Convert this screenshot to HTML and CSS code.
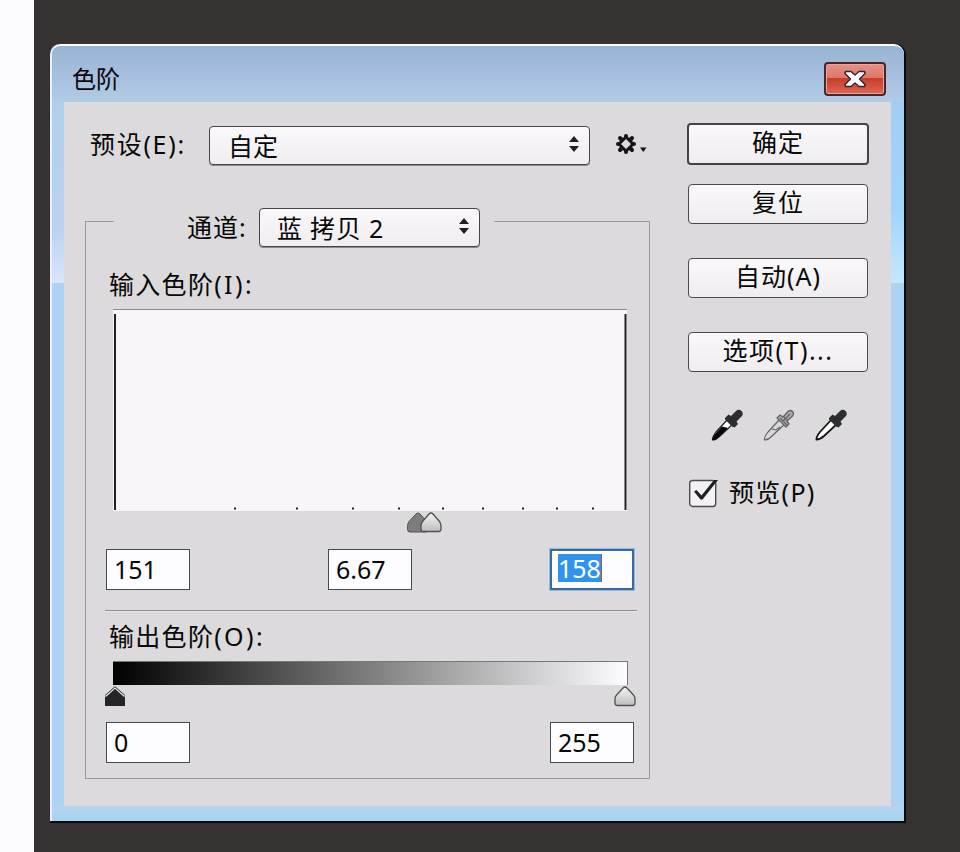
FILE: index.html
```html
<!DOCTYPE html>
<html lang="zh-CN">
<head>
  <meta charset="UTF-8">
  <meta name="viewport" content="width=device-width, initial-scale=1.0">
  <title>色阶</title>
  <link rel="stylesheet" href="styles.css">
</head>
<body>
  <div class="page-edge"></div>
  <main class="workspace">
    <div class="dialog">
      <header class="titlebar">
        <h1>色阶</h1>
        <button class="close" type="button" aria-label="关闭">
          <svg width="24" height="20" viewBox="0 0 24 20">
            <path d="M2.500 2.500h5.500l4 3.500 4-3.500h5.500l.5 2L16.500 10l5.500 5.500-.5 2H16L12 14l-4 3.500H2.500l-.5-2L7.500 10 2 4.500z" fill="#fff" stroke="#342638" stroke-width="1.500" stroke-linejoin="round"/>
          </svg>
        </button>
      </header>

      <div class="panel">
        <section class="settings">
          <div class="preset">
            <span class="label">预设(E):</span>
            <div class="select select-preset">
              <span>自定</span>
              <svg class="arrows" width="12" height="16" viewBox="0 0 12 16"><path d="M6 0l5 6H1zM1 10h10l-5 6z"/></svg>
            </div>
            <svg class="gear" width="32" height="24" viewBox="0 0 32 24">
              <path d="M10 4.500l5.500 2 2 5.500-2 5.500-5.500 2-5.500-2-2-5.500 2-5.500zM10 7l-5 5 5 5 5-5z" fill="#151515" fill-rule="evenodd"/>
              <path d="M10 4v1M10 19v1M2 12h1M17 12h1M4 6l1 1M15 17l1 1M16 6l-1 1M5 17l-1 1" stroke="#151515" stroke-width="4" stroke-linecap="round"/>
              <path d="M24 15.500h6.500l-3.200 4.500z" fill="#151515"/>
            </svg>
          </div>

          <fieldset class="group">
            <legend>
              <span class="label">通道:</span>
              <div class="select select-channel">
                <span>蓝 拷贝 2</span>
                <svg class="arrows" width="12" height="16" viewBox="0 0 12 16"><path d="M6 0l5 6H1zM1 10h10l-5 6z"/></svg>
              </div>
            </legend>

            <div class="label label-input">输入色阶<span class="key">(I):</span></div>
            <svg class="histogram" width="515" height="202" viewBox="0 0 515 202">
              <rect width="514" height="202" fill="#f8f6fa"/>
              <path d="M0 .5h514" fill="none" stroke="#8b8a8c"/>
              <path d="M2 5v196M512.500 5v196" stroke="#202020" stroke-width="2"/>
              <path d="M121 199.500h2M183 199.500h2M239 199.500h2M285 199.500h2M329 199.500h2M369 199.500h2M409 199.500h2M443 199.500h2M479 199.500h2" stroke="#222" stroke-width="2"/>
            </svg>
            <svg class="track" width="532" height="38" viewBox="0 0 532 38">
              <defs>
                <linearGradient id="light" x2="0" y2="1">
                  <stop offset="0" stop-color="#f4f4f4"/>
                  <stop offset="1" stop-color="#bdbdbd"/>
                </linearGradient>
              </defs>
              <path d="M314 2q-1 0-2 1l-7 7.500q-1.500 2-1.500 5v3q0 2.500 2.500 2.500h16q2.500 0 2.500-2.500v-3q0-3-1.500-5l-7-7.500q-1-1-2-1z" fill="#7e7d7e" stroke="#555"/>
              <path d="M327 2q-1 0-2 1l-6.500 7.500q-1.500 2-1.500 4.500v3q0 2.500 2.500 2.500h15q2.500 0 2.500-2.500v-3q0-2.500-1.500-4.500L329 3q-1-1-2-1z" fill="url(#light)" stroke="#505050" stroke-width="1.300"/>
            </svg>
            <div class="fields">
              <div class="field">151</div>
              <div class="field">6.67</div>
              <div class="field focused"><span class="selection">158</span></div>
            </div>

            <div class="divider"></div>

            <div class="label label-output">输出色阶<span class="key">(O):</span></div>
            <div class="ramp"></div>
            <svg class="track" width="532" height="37" viewBox="0 0 532 37">
              <path d="M11 2L1 11.500V21h20v-9.500z" fill="#232527"/>
              <path d="M1.500 11.500L11 3l9.500 8.500" fill="none" stroke="#e5e5e5" stroke-width="1.200"/>
              <path d="M1 10.500L11 1.700l10 8.800" fill="none" stroke="#444"/>
              <path d="M521 2q-1 0-2 1l-6.500 7Q511 11.500 511 14v4q0 2.500 2.500 2.500h15q2.500 0 2.500-2.500v-4q0-2.500-1.500-4L523 3q-1-1-2-1z" fill="url(#light)" stroke="#505050" stroke-width="1.300"/>
            </svg>
            <div class="fields">
              <div class="field">0</div>
              <div class="field">255</div>
            </div>
          </fieldset>
        </section>

        <aside class="actions">
          <button class="btn btn-default" type="button">确定</button>
          <button class="btn btn-reset" type="button">复位</button>
          <button class="btn" type="button">自动(A)</button>
          <button class="btn btn-options" type="button">选项(T)...</button>

          <div class="pickers">
            <svg width="32" height="32" viewBox="0 0 32 32">
              <path d="M17 10L5 23Q1 28 1.500 31 5 31 9 27L22 15z" fill="#fff" stroke="#222" stroke-width="1.200"/>
              <path d="M11 17.500L5 24Q1 28 1.500 31 5 31 9 27l8-8z" fill="#050505"/>
              <path d="M14 9l3.500-3.500L20 7l5-5q3-2.500 5.500 0t0 5.500l-5 5 1.500 2.500-3.500 3.500-2.500-1L14 10.500z" fill="#2c2d2f"/>
            </svg>
            <svg width="32" height="32" viewBox="0 0 32 32">
              <path d="M17 10L5 23Q1 28 1.500 31 5 31 9 27L22 15z" fill="#d8d7d9" stroke="#626264" stroke-width="1.200"/>
              <path d="M14 9l3-3 3 2 5-5.500q2.500-2 4.500 0t0 4.500L24 12l2 3-3 3z" fill="#a9a8aa" stroke="#626264" stroke-width="1.300"/>
              <path d="M9 20l4 1 4-3M17 9l7 7M20 7l5 5M20 12l7-7" fill="none" stroke="#626264" stroke-width="1.100"/>
            </svg>
            <svg width="32" height="32" viewBox="0 0 32 32">
              <path d="M17 10L5 23Q1 28 1.500 30.500 5 30.500 9 27L22 15z" fill="#fff" stroke="#151515" stroke-width="1.800"/>
              <path d="M14 9l3.500-3.500L20 7l5-5q3-2.500 5.500 0t0 5.500l-5 5 1.500 2.500-3.500 3.500-2.500-1L14 10.500z" fill="#2c2d2f"/>
            </svg>
          </div>

          <div class="preview">
            <svg width="30" height="30" viewBox="0 0 30 30">
              <rect x=".7" y="2.500" width="26" height="26" rx="3" fill="#f3f1f5" stroke="#4c4c4e" stroke-width="1.400"/>
              <path d="M5 13.500l2.500-1.500 5 5.500L25 2h4L13.500 21.500h-2z" fill="#202022"/>
            </svg>
            <span class="label">预览(P)</span>
          </div>
        </aside>
      </div>
    </div>
  </main>
</body>
</html>
```
FILE: styles.css
```css
* {
  box-sizing: border-box;
}
body {
  display: flex;
  width: 960px;
  height: 852px;
  margin: 0;
  overflow: hidden;
  background-color: #353231;
  color: #080808;
  font-family: "Noto Sans", "Noto Sans CJK SC", sans-serif;
  font-size: 25px;
  line-height: 36px;
}
.page-edge {
  width: 34px;
  background-color: #fcfbff;
}
.workspace {
  padding: 44px 0 0 16px;
}

/* window frame */
.dialog {
  width: 854px;
  height: 777px;
  padding: 0 13px 0 12px;
  border-top: 2px solid #fafcff;
  border-left: 2px solid #e8f1fb;
  border-radius: 10px 10px 0 0;
  background:
    linear-gradient(#97b4d3, #a9c1e0 60%, #b0cce6) 0 0 / 100% 56px no-repeat,
    linear-gradient(#b1cfeb, #b9d2f0 70%, #d9e6fa) 0 56px / 12px 181px no-repeat,
    linear-gradient(#a3cdf2, #a2d4fb 60%, #c5e7ff) 100% 56px / 13px 181px no-repeat,
    linear-gradient(#b7d3ef, #a0d5f1) 0 100% / 100% 15px no-repeat,
    #acd3f2;
  box-shadow: 1px 1px 0 1px #080b0e;
}
.titlebar {
  display: flex;
  justify-content: space-between;
  height: 56px;
}
h1 {
  margin: 15px 0 0 8px;
  font-size: 24px;
  font-weight: normal;
}
.close {
  display: flex;
  align-items: center;
  justify-content: center;
  width: 62px;
  height: 34px;
  margin: 16px 5px 0 0;
  padding: 0;
  border: 2px solid #49252c;
  border-radius: 4px;
  background: linear-gradient(#e49286, #de7768 46%, #c53d2a 47%, #dc6653);
  box-shadow: inset 0 0 0 1px #f0a498;
}
.panel {
  display: flex;
  height: 704px;
  background-color: #dcdadc;
}

.settings {
  width: 623px;
  padding-left: 21px;
}
.label {
  letter-spacing: 1.300px;
  white-space: nowrap;
}
.key {
  letter-spacing: 2.400px;
}
.preset {
  display: flex;
  height: 106px;
  padding-top: 24px;
}
.preset .label {
  width: 124px;
  padding: 0 0 0 5px;
  letter-spacing: 1.700px;
}
.select {
  display: flex;
  align-items: center;
  justify-content: space-between;
  height: 39px;
  padding: 0 9px 0 18px;
  border: 1px solid #454547;
  border-radius: 4px;
  background: linear-gradient(#faf8fb, #efedf0);
  box-shadow: 0 1px 0 #8a898b;
  white-space: pre;
}
.select-preset {
  width: 381px;
}
.select-channel {
  width: 221px;
  padding-left: 17px;
  letter-spacing: .8px;
}
.arrows {
  margin-top: -3px;
  fill: #202022;
}
.gear {
  margin: 6px 0 0 26px;
}

/* levels group */
.group {
  width: 565px;
  height: 571px;
  margin: 0;
  padding: 0 0 0 20px;
  border: 1px solid #9b9a9c;
}
legend {
  display: flex;
  width: 380px;
  height: 26px;
  margin-left: 8px;
  padding: 0;
}
legend .label {
  width: 145px;
  padding: 1px 0 0 73px;
  letter-spacing: 1px;
}
.label-input {
  height: 75px;
  padding: 32px 0 0 3px;
}
.histogram,
.track {
  display: block;
}
.histogram {
  margin-left: 7px;
}
.track {
  margin-left: -2px;
}
.fields {
  display: flex;
  justify-content: space-between;
  width: 528px;
}
.field {
  width: 84px;
  height: 41px;
  padding: 1px 0 0 7px;
  border: 1.500px solid #48484a;
  background-color: #fdfcff;
}
.focused {
  padding: 0 0 0 6px;
  border: 2px solid #39699f;
  box-shadow: 0 0 0 1px #91bce8;
}
.selection {
  display: block;
  width: 44px;
  height: 28px;
  margin-top: 3px;
  border-right: 1px solid #a34f4c;
  background-color: #3293ed;
  color: #fff;
  line-height: 28px;
}
.divider {
  width: 532px;
  height: 2px;
  margin: 20px 0 0 -1px;
  border-top: 1px solid #8e8d8f;
  border-bottom: 1px solid #e9e7ea;
}
.label-output {
  height: 49px;
  padding: 6px 0 0 3px;
}
.ramp {
  width: 515px;
  height: 24px;
  margin-left: 7px;
  border: 1px solid #77767a;
  border-width: 1px 1px 0 0;
  background: linear-gradient(90deg, #000, #fdfcfe);
}

/* right column */
.actions {
  width: 182px;
  padding-top: 21px;
}
.btn {
  display: block;
  width: 180px;
  height: 40px;
  margin: 0 1px 34px;
  padding: 0 0 5px;
  border: 1.500px solid #4b4b4d;
  border-radius: 4px;
  background: linear-gradient(#faf8fb, #efedf0);
  color: #080808;
  font: inherit;
  letter-spacing: 1px;
  line-height: 34px;
}
.btn-default {
  width: 182px;
  height: 42px;
  margin: 0 0 19px;
  border: 2px solid #444446;
}
.btn-options {
  letter-spacing: 1.500px;
}
.pickers {
  display: flex;
  gap: 20px;
  padding: 3px 0 0 24px;
}
.preview {
  display: flex;
  padding: 37px 0 0 2px;
}
.preview .label {
  margin: -4px 0 0 10px;
}
```
